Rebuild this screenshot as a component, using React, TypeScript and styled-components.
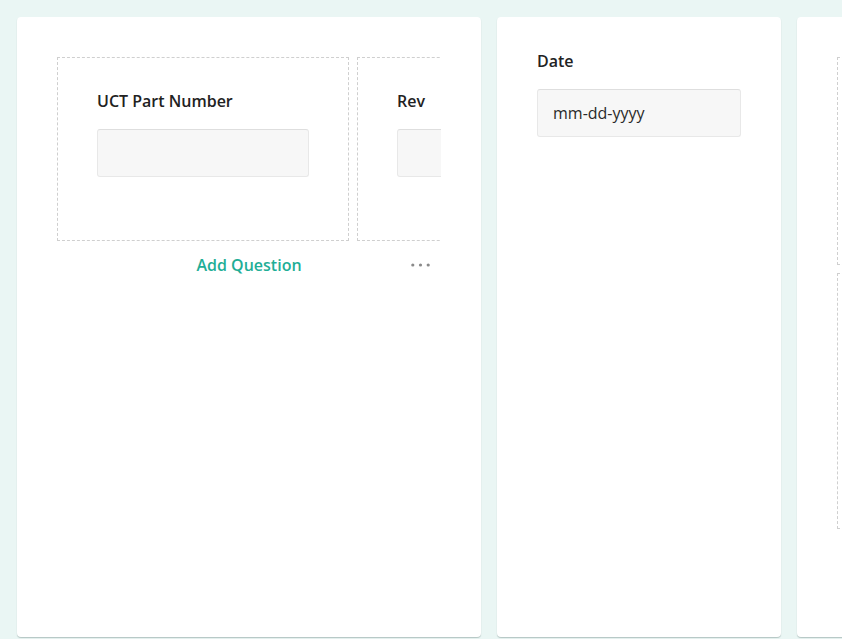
import React from "react";
import styled, { createGlobalStyle } from "styled-components";

const Global = createGlobalStyle`
  html, body { margin: 0; padding: 0; height: 100%; }
  body {
    background: #eaf6f4;
    font-family: "Open Sans", "Noto Sans", sans-serif;
    overflow: hidden;
  }
  #root { height: 100%; }
`;

const Board = styled.div`
  display: flex;
  gap: 16px;
  height: 639px;
  box-sizing: border-box;
  padding: 17px 0 2px 17px;
  overflow: hidden;
`;

const Card = styled.div<{ $w: number; $pt: number }>`
  flex: 0 0 ${(p) => p.$w}px;
  box-sizing: border-box;
  height: 620px;
  background: #fff;
  border-radius: 4px;
  box-shadow: 0 1px 1px rgba(40, 70, 64, 0.28);
  padding: ${(p) => p.$pt}px 40px 0 40px;
  overflow: hidden;
`;

const BoxRow = styled.div`
  display: flex;
  gap: 8px;
  overflow: hidden;
`;

const BoxColumn = styled.div`
  display: flex;
  flex-direction: column;
  gap: 8px;
`;

const QuestionBox = styled.div<{ $h: number }>`
  flex: none;
  width: 292px;
  height: ${(p) => p.$h}px;
  box-sizing: border-box;
  border: 1px dashed #cfcfcf;
  padding: 31px 39px 0 39px;
`;

const Label = styled.div`
  font-size: 16px;
  line-height: 24px;
  font-weight: 600;
  color: #222;
  margin-bottom: 16px;
  white-space: nowrap;
`;

const Input = styled.div<{ $w: number }>`
  width: ${(p) => p.$w}px;
  height: 48px;
  box-sizing: border-box;
  background: #f7f7f7;
  border: 1px solid #e8e8e8;
  border-top-color: #dedede;
  border-radius: 3px;
  padding: 0 15px;
  display: flex;
  align-items: center;
  font-size: 16px;
  color: #2a2a2a;
  flex-shrink: 0;
`;

const Footer = styled.div`
  display: grid;
  grid-template-columns: 1fr auto 1fr;
  align-items: center;
  margin-top: 12px;
`;

const AddQuestion = styled.div`
  grid-column: 2;
  font-size: 16px;
  line-height: 24px;
  font-weight: 600;
  color: #1fae97;
`;

const MoreButton = styled.div`
  grid-column: 3;
  justify-self: end;
  margin-right: 11px;
  display: flex;
`;

const Dots = () => (
  <svg width="19" height="4" viewBox="0 0 19 4">
    <circle cx="1.8" cy="2" r="1.6" fill="#8a8a8a" />
    <circle cx="9.5" cy="2" r="1.6" fill="#8a8a8a" />
    <circle cx="17.2" cy="2" r="1.6" fill="#8a8a8a" />
  </svg>
);

export default function App() {
  return (
    <>
      <Global />
      <Board>
        <Card $w={464} $pt={40}>
          <BoxRow>
            <QuestionBox $h={184}>
              <Label>UCT Part Number</Label>
              <Input $w={212} />
            </QuestionBox>
            <QuestionBox $h={184}>
              <Label>Rev</Label>
              <Input $w={212} />
            </QuestionBox>
          </BoxRow>
          <Footer>
            <AddQuestion>Add Question</AddQuestion>
            <MoreButton>
              <Dots />
            </MoreButton>
          </Footer>
        </Card>
        <Card $w={284} $pt={32}>
          <Label>Date</Label>
          <Input $w={204}>mm-dd-yyyy</Input>
        </Card>
        <Card $w={284} $pt={40}>
          <BoxColumn>
            <QuestionBox $h={208} />
            <QuestionBox $h={256} />
          </BoxColumn>
        </Card>
      </Board>
    </>
  );
}
